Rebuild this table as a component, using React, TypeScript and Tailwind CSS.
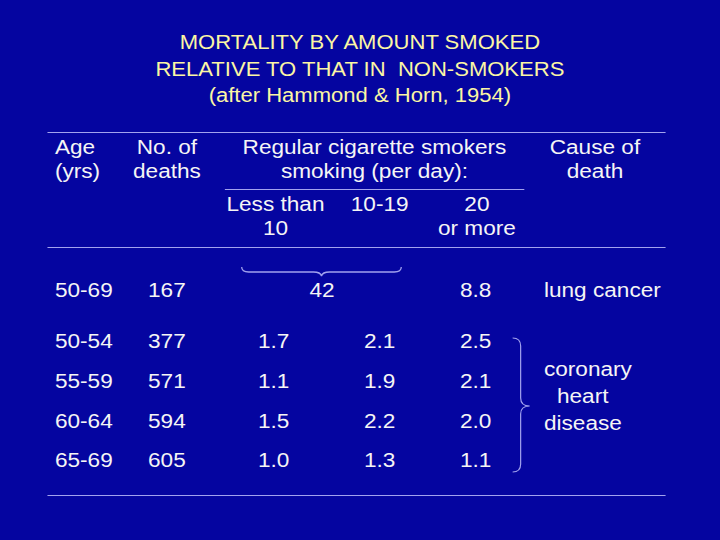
const ruleColor = "#a3a3ee";

// the slide text is wider than plain Arial, so the page is laid out at
// 1/1.13 of its width and stretched back horizontally
function UnderBrace() {
  return (
    <svg width="143" height="11" viewBox="0 0 162 11" preserveAspectRatio="none" className="block">
      <path
        d="M1,1 Q1,6 8,6 L73,6 Q80,6 81,10 Q82,6 89,6 L154,6 Q161,6 161,1"
        fill="none"
        stroke={ruleColor}
        strokeWidth="1.3"
      />
    </svg>
  );
}

function SideBrace() {
  return (
    <svg width="19.5" height="136" viewBox="0 0 22 136" preserveAspectRatio="none" className="block">
      <path
        d="M3,1 Q11,1 11,9 L11,61 Q11,69 20,69 Q11,69 11,77 L11,127 Q11,135 3,135"
        fill="none"
        stroke={ruleColor}
        strokeWidth="1.2"
      />
    </svg>
  );
}

const rows = [
  { age: "50-54", deaths: "377", a: "1.7", b: "2.1", c: "2.5" },
  { age: "55-59", deaths: "571", a: "1.1", b: "1.9", c: "2.1" },
  { age: "60-64", deaths: "594", a: "1.5", b: "2.2", c: "2.0" },
  { age: "65-69", deaths: "605", a: "1.0", b: "1.3", c: "1.1" },
];

export default function App() {
  return (
    <div className="w-[720px] h-[540px] overflow-hidden bg-[#0505a0] font-['Liberation_Sans',Arial,sans-serif] text-[20px] text-[#f5f5f5]">
      <div className="w-[637px] h-[540px] origin-left scale-x-[1.13]">
        <div className="pt-[29px] text-center text-[19.5px] leading-[26.5px] text-[#fbf6a4] whitespace-pre">
          <div>MORTALITY BY AMOUNT SMOKED</div>
          <div>RELATIVE TO THAT IN  NON-SMOKERS</div>
          <div>(after Hammond &amp; Horn, 1954)</div>
        </div>

        <div className="ml-[41.6px] mt-[23px] w-[547.8px] border-b border-[#a3a3ee]">
          {/* header */}
          <div className="flex border-y border-[#a3a3ee] leading-[24px]">
            <div className="w-[69px] pl-[7px] pt-[2px]">
              <div>Age</div>
              <div>(yrs)</div>
            </div>
            <div className="w-[74.3px] pt-[2px] text-center">
              <div>No. of</div>
              <div>deaths</div>
            </div>
            <div className="w-[14.2px]" />
            <div className="w-[264.6px]">
              <div className="border-b border-[#a3a3ee] pt-[2px] pb-[6px] text-center">
                <div>Regular cigarette smokers</div>
                <div>smoking (per day):</div>
              </div>
              <div className="flex pt-[2px] pb-[7px] text-center">
                <div className="w-[89.4px]">
                  <div>Less than</div>
                  <div>10</div>
                </div>
                <div className="w-[92px] pl-[3px]">10-19</div>
                <div className="w-[83.2px]">
                  <div>20</div>
                  <div>or more</div>
                </div>
              </div>
            </div>
            <div className="w-[125.7px] pt-[2px] text-center">
              <div>Cause of</div>
              <div>death</div>
            </div>
          </div>

          {/* lung cancer */}
          <div className="flex items-end pt-[18px] leading-[24px]">
            <div className="w-[89.4px] pl-[7px]">50-69</div>
            <div className="w-[69px]">167</div>
            <div className="flex w-[169.9px] flex-col items-center">
              <UnderBrace />
              <div className="mt-[1px]">42</div>
            </div>
            <div className="w-[37.2px]" />
            <div className="w-[74.3px]">8.8</div>
            <div className="flex-1">lung cancer</div>
          </div>

          {/* coronary heart disease */}
          <div className="flex pt-[20px] pb-[15px]">
            <div className="w-[409.7px]">
              {rows.map((r) => (
                <div key={r.age} className="flex h-[39.7px] items-center">
                  <div className="w-[89.4px] pl-[7px]">{r.age}</div>
                  <div className="w-[97.3px]">{r.deaths}</div>
                  <div className="w-[93.8px]">{r.a}</div>
                  <div className="w-[85px]">{r.b}</div>
                  <div className="w-[44.2px]">{r.c}</div>
                </div>
              ))}
            </div>
            <div className="w-[19.5px] pt-[15px]">
              <SideBrace />
            </div>
            <div className="flex-1 pl-[10.6px] pt-[34px] leading-[27px]">
              <div>coronary</div>
              <div className="pl-[11.5px]">heart</div>
              <div>disease</div>
            </div>
          </div>
        </div>
      </div>
    </div>
  );
}
